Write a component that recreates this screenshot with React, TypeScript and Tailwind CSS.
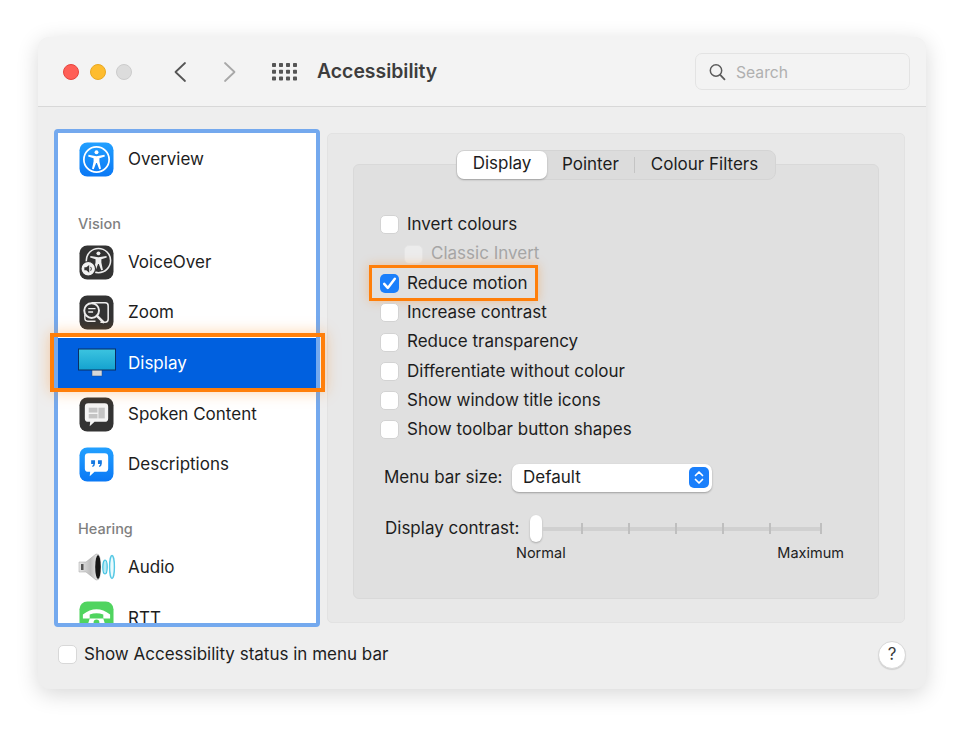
import React from "react";

const font = { fontFamily: '"Inter", "Liberation Sans", sans-serif' };

function Person({ cx = 18, cy = 18, c = "#fff" }: { cx?: number; cy?: number; c?: string }) {
  return (
    <g transform={`translate(${cx - 18} ${cy - 18})`} fill={c}>
      <circle cx="18" cy="10.6" r="2" />
      <path d="M9.8 13.2 L18 14.6 L26.2 13.2 L26.6 14.8 L21 16.6 L21 20 L22.6 27.6 L20.8 28 L18.4 21.6 L17.6 21.6 L15.2 28 L13.4 27.6 L15 20 L15 16.6 L9.4 14.8 Z" />
    </g>
  );
}

function IconOverview() {
  return (
    <svg width="35" height="35" viewBox="0 0 36 36">
      <defs>
        <linearGradient id="blueg" x1="0" y1="0" x2="0" y2="1">
          <stop offset="0" stopColor="#22a0ff" />
          <stop offset="1" stopColor="#0a78f5" />
        </linearGradient>
      </defs>
      <rect x="0.5" y="0.5" width="35" height="35" rx="8" fill="url(#blueg)" />
      <circle cx="18" cy="18" r="13" fill="none" stroke="#fff" strokeWidth="1.8" />
      <Person />
    </svg>
  );
}

function IconVoiceOver() {
  return (
    <svg width="35" height="35" viewBox="0 0 36 36">
      <rect x="0.5" y="0.5" width="35" height="35" rx="8" fill="#333333" />
      <circle cx="20" cy="16" r="12.5" fill="none" stroke="#eee" strokeWidth="1.6" />
      <g transform="translate(2 -2)">
        <Person c="#eee" />
      </g>
      <circle cx="9.5" cy="24.5" r="7.5" fill="#f1f1f1" stroke="#333" strokeWidth="1.2" />
      <path d="M5.5 23 H7.5 L10.5 20.5 V28.5 L7.5 26 H5.5 Z" fill="#333" />
      <path d="M12 22.5 Q13.5 24.5 12 26.5" fill="none" stroke="#333" strokeWidth="1" />
    </svg>
  );
}

function IconZoom() {
  return (
    <svg width="35" height="35" viewBox="0 0 36 36">
      <rect x="0.5" y="0.5" width="35" height="35" rx="8" fill="#333333" />
      <path d="M13 8 H27 Q30 8 30 11 V25 Q30 28 27 28 H22" fill="none" stroke="#eee" strokeWidth="1.6" />
      <circle cx="13" cy="16" r="7.6" fill="#333" stroke="#eee" strokeWidth="2" />
      <path d="M9.5 14 H17 M9.5 17.5 H14.5" stroke="#eee" strokeWidth="1.5" />
      <path d="M18.5 21.5 L25 28" stroke="#eee" strokeWidth="2.6" strokeLinecap="round" />
      <path d="M6 20 V24 Q6 27 9 27 H17" fill="none" stroke="#eee" strokeWidth="1.4" />
    </svg>
  );
}

function IconDisplay() {
  return (
    <svg width="38" height="30" viewBox="0 0 38 30">
      <defs>
        <linearGradient id="dispg" x1="0" y1="0" x2="0" y2="1">
          <stop offset="0" stopColor="#3cc4e0" />
          <stop offset="1" stopColor="#14a2cf" />
        </linearGradient>
      </defs>
      <rect x="14" y="21" width="10" height="7" fill="#d8d8d8" stroke="#1c4a8a" strokeWidth="0.5" />
      <rect x="0.5" y="1" width="37" height="21" fill="url(#dispg)" stroke="#0b2f63" strokeWidth="1" />
    </svg>
  );
}

function IconSpoken() {
  return (
    <svg width="35" height="35" viewBox="0 0 36 36">
      <rect x="0.5" y="0.5" width="35" height="35" rx="8" fill="#333333" />
      <path d="M9.5 6.5 H26.5 Q30 6.5 30 10 V22 Q30 25.5 26.5 25.5 H16 L11 30 L11.5 25.5 H9.5 Q6 25.5 6 22 V10 Q6 6.5 9.5 6.5 Z" fill="#f4f4f4" />
      <rect x="10" y="11" width="9" height="5" fill="#c4c4c4" />
      <rect x="10" y="17.5" width="9" height="4.5" fill="#c4c4c4" />
      <rect x="20" y="11" width="6.5" height="11" fill="#c4c4c4" />
    </svg>
  );
}

function IconDescriptions() {
  return (
    <svg width="35" height="35" viewBox="0 0 36 36">
      <rect x="0.5" y="0.5" width="35" height="35" rx="8" fill="url(#blueg)" />
      <path d="M9.5 6.5 H26.5 Q30 6.5 30 10 V22 Q30 25.5 26.5 25.5 H16 L11 30 L11.5 25.5 H9.5 Q6 25.5 6 22 V10 Q6 6.5 9.5 6.5 Z" fill="#fff" />
      <path d="M12.5 13.5 H16.5 V17 Q16.5 19.5 14 20.5 L13.5 19.5 Q14.8 18.6 14.8 17.4 H12.5 Z M19.5 13.5 H23.5 V17 Q23.5 19.5 21 20.5 L20.5 19.5 Q21.8 18.6 21.8 17.4 H19.5 Z" fill="#1477e0" />
    </svg>
  );
}

function IconAudio() {
  return (
    <svg width="38" height="30" viewBox="0 0 38 30">
      <defs>
        <linearGradient id="spk" x1="0" y1="0" x2="1" y2="0">
          <stop offset="0" stopColor="#e8e8e8" />
          <stop offset="0.55" stopColor="#bdbdbd" />
          <stop offset="1" stopColor="#f4f4f4" />
        </linearGradient>
      </defs>
      <path d="M1 10 H8 L18 2 Q21 1 22 6 V24 Q21 29 18 28 L8 20 H1 Z" fill="url(#spk)" stroke="#a0a0a0" strokeWidth="0.5" />
      <rect x="3" y="12" width="2.5" height="6" fill="#555" />
      <ellipse cx="20" cy="15" rx="2.8" ry="12" fill="#161616" />
      <ellipse cx="27" cy="15" rx="2.2" ry="7" fill="#b8eaf6" stroke="#3fc0e0" strokeWidth="1.2" />
      <ellipse cx="34" cy="15" rx="2.4" ry="11.5" fill="#e9fafd" stroke="#55c8e4" strokeWidth="1.4" />
    </svg>
  );
}

function IconRTT() {
  return (
    <svg width="35" height="35" viewBox="0 0 36 36">
      <rect x="0.5" y="0.5" width="35" height="35" rx="8" fill="#50d45f" />
      <path d="M4 14 Q18 3 32 14 V18 H25 V14 Q18 11 11 14 V18 H4 Z" fill="#fff" />
      <path d="M11 18 H25 L28 28 H8 Z" fill="#fff" />
      <circle cx="18" cy="22" r="3" fill="#50d45f" />
    </svg>
  );
}

function Row({ icon, label, selected }: { icon: React.ReactNode; label: string; selected?: boolean }) {
  return (
    <div className={`flex h-[50.7px] shrink-0 items-center ${selected ? "bg-[#0060df] text-white" : "text-[#1d1d1d]"}`}>
      <div className="flex w-[70px] shrink-0 justify-center pl-[7px]">{icon}</div>
      <span className="text-[17px] leading-none">{label}</span>
    </div>
  );
}

function SideHeading({ label }: { label: string }) {
  return (
    <div className="flex h-[52px] shrink-0 items-end pb-[3px] pl-[20px] text-[14.5px] font-medium leading-[20px] text-[#7f7f7f]">
      {label}
    </div>
  );
}

function Check({ checked, dim }: { checked?: boolean; dim?: boolean }) {
  if (checked) {
    return (
      <span className="flex h-[19px] w-[19px] shrink-0 items-center justify-center rounded-[5px] bg-[#1a7ffb]">
        <svg width="17" height="17" viewBox="0 0 15 15">
          <path d="M2.8 7.8 L6 11.4 L12.2 3.4" fill="none" stroke="#fff" strokeWidth="2.2" strokeLinecap="round" strokeLinejoin="round" />
        </svg>
      </span>
    );
  }
  return (
    <span
      className={`block h-[19px] w-[19px] shrink-0 rounded-[5px] border ${
        dim ? "border-[#e4e4e4] bg-[#ececec]" : "border-[#d3d3d3] bg-white"
      }`}
    />
  );
}

function Option({ label, checked, highlight }: { label: string; checked?: boolean; highlight?: boolean }) {
  return (
    <div className="relative flex h-[29.3px] items-center gap-[8px] text-[17px] text-[#1d1d1d]">
      <Check checked={checked} />
      <span>{label}</span>
      {highlight && (
        <div className="absolute left-[-11px] top-[-4px] h-[36px] w-[169px] border-[3px] border-[#ff7f0a] shadow-[0_0_10px_rgba(255,127,10,0.35)]" />
      )}
    </div>
  );
}

const options: { label: string; checked?: boolean; highlight?: boolean }[] = [
  { label: "Reduce motion", checked: true, highlight: true },
  { label: "Increase contrast" },
  { label: "Reduce transparency" },
  { label: "Differentiate without colour" },
  { label: "Show window title icons" },
  { label: "Show toolbar button shapes" },
];

const ticks = [1, 2, 3, 4];

export default function App() {
  return (
    <div className="h-[730px] w-[963px] overflow-hidden bg-white pl-[38px] pt-[37px]" style={font}>
      <div className="flex h-[652px] w-[888px] flex-col overflow-hidden rounded-[12px] bg-[#eeeeee] shadow-[0_5px_22px_rgba(0,0,0,0.16)]">
        {/* Title bar */}
        <div className="flex h-[70px] shrink-0 items-center border-b border-[#d8d8d8] bg-[#f3f3f3] pl-[25px] pr-[16px]">
          <span className="h-[16px] w-[16px] rounded-full border border-[#e6443e] bg-[#ff5f57]" />
          <span className="ml-[11px] h-[16px] w-[16px] rounded-full border border-[#e8a823] bg-[#febc2e]" />
          <span className="ml-[10px] h-[16px] w-[16px] rounded-full border border-[#cccccc] bg-[#dcdcdc]" />
          <svg className="ml-[41px]" width="14" height="22" viewBox="0 0 14 22">
            <path d="M12 2 L2.5 11 L12 20" fill="none" stroke="#555" strokeWidth="1.8" strokeLinecap="round" strokeLinejoin="round" />
          </svg>
          <svg className="ml-[36px]" width="14" height="22" viewBox="0 0 14 22">
            <path d="M2 2 L11.5 11 L2 20" fill="none" stroke="#a8a8a8" strokeWidth="1.8" strokeLinecap="round" strokeLinejoin="round" />
          </svg>
          <svg className="ml-[35px]" width="25" height="18" viewBox="0 0 25 18" fill="#555">
            {[0, 1, 2].map((r) =>
              [0, 1, 2, 3].map((c) => <rect key={`${r}-${c}`} x={c * 7} y={r * 6.8} width="4" height="4" rx="0.8" />)
            )}
          </svg>
          <span className="ml-[20px] text-[19.4px] font-semibold text-[#3d3d3d]">Accessibility</span>
          <div className="ml-auto flex h-[37px] w-[215px] items-center rounded-[7px] border border-[#e3e3e3] bg-[#f3f3f3] pl-[13px]">
            <svg width="17" height="18" viewBox="0 0 17 18">
              <circle cx="7" cy="7.5" r="5.7" fill="none" stroke="#5c5c5c" strokeWidth="1.5" />
              <path d="M11.2 11.8 L15.5 16.3" stroke="#5c5c5c" strokeWidth="1.8" strokeLinecap="round" />
            </svg>
            <span className="ml-[10px] pt-[2px] text-[15.7px] text-[#b0b0b0]">Search</span>
          </div>
        </div>

        {/* Body */}
        <div className="relative flex min-h-0 flex-1 flex-col px-[16px]">
          <div className="mt-[22px] flex h-[498px] items-start">
            {/* Sidebar */}
            <div className="flex h-[498px] w-[266px] shrink-0 flex-col overflow-hidden rounded-[4px] border-[4px] border-[#74a9ee] bg-white pt-[1px]">
              <Row icon={<IconOverview />} label="Overview" />
              <SideHeading label="Vision" />
              <Row icon={<IconVoiceOver />} label="VoiceOver" />
              <Row icon={<IconZoom />} label="Zoom" />
              <Row icon={<IconDisplay />} label="Display" selected />
              <Row icon={<IconSpoken />} label="Spoken Content" />
              <Row icon={<IconDescriptions />} label="Descriptions" />
              <SideHeading label="Hearing" />
              <Row icon={<IconAudio />} label="Audio" />
              <Row icon={<IconRTT />} label="RTT" />
            </div>

            {/* Right panel */}
            <div className="ml-[7px] mt-[4px] flex h-[490px] w-[578px] flex-col rounded-[5px] border border-[#e2e2e2] bg-[#e8e8e8] px-[25px] pt-[16px]">
              <div className="relative z-10 mb-[-16px] flex h-[30px] w-[320px] items-center self-center rounded-[8px] border border-[#d4d4d4] bg-[#dcdcdc] pb-[1px] text-[17px] text-[#1d1d1d]">
                <div className="flex h-[28px] w-[90px] items-center justify-center rounded-[7px] bg-white pb-[1px] shadow-[0_1px_2px_rgba(0,0,0,0.25)]">
                  Display
                </div>
                <span className="ml-[15px]">Pointer</span>
                <span className="ml-[15px] h-[16px] w-px bg-[#c4c4c4]" />
                <span className="ml-[16px]">Colour Filters</span>
              </div>
              <div className="flex h-[435px] w-[526px] flex-col rounded-[6px] border border-[#d9d9d9] bg-[#e0e0e0] pl-[26px] pt-[45.2px]">
                <Option label="Invert colours" />
                <div className="flex h-[29.3px] items-center gap-[8px] pl-[24px] text-[17px] text-[#a6a6a6]">
                  <Check dim />
                  <span>Classic Invert</span>
                </div>
                {options.map((o) => (
                  <Option key={o.label} {...o} />
                ))}

                <div className="ml-[4px] mt-[19.4px] flex h-[28px] items-center text-[17px] text-[#1d1d1d]">
                  <span className="w-[128px] shrink-0">Menu bar size:</span>
                  <div className="flex h-[28px] w-[200px] items-center rounded-[7px] bg-white pl-[11px] pr-[3px] shadow-[0_1px_2px_rgba(0,0,0,0.3)]">
                    <span>Default</span>
                    <span className="ml-auto flex h-[21px] w-[20px] items-center justify-center rounded-[5px] bg-[#1a7ffb]">
                      <svg width="12" height="17" viewBox="0 0 12 17">
                        <path d="M2.5 6.5 L6 3 L9.5 6.5 M2.5 10.5 L6 14 L9.5 10.5" fill="none" stroke="#fff" strokeWidth="1.7" strokeLinecap="round" strokeLinejoin="round" />
                      </svg>
                    </span>
                  </div>
                </div>

                <div className="ml-[5px] mt-[23px] flex h-[28px] items-center text-[17px] text-[#1d1d1d]">
                  <span className="w-[145px] shrink-0">Display contrast:</span>
                  <span className="h-[27px] w-[12px] shrink-0 rounded-[6px] bg-white shadow-[0_1px_2px_rgba(0,0,0,0.25)]" />
                  <div className="relative flex h-[12px] w-[280px] items-center">
                    <div className="absolute inset-x-0 top-[4px] h-[4px] bg-[#d0d0d0]" />
                    <span className="relative ml-[39px] h-[11px] w-[2px] bg-[#bfbfbf]" />
                    {ticks.map((t) => (
                      <span key={t} className="relative ml-[45px] h-[11px] w-[2px] bg-[#bfbfbf]" />
                    ))}
                    <span className="relative ml-auto h-[11px] w-[2px] bg-[#bfbfbf]" />
                  </div>
                </div>
                <div className="ml-[136px] flex w-[328px] justify-between text-[14.5px] leading-[20px] text-[#1d1d1d]">
                  <span>Normal</span>
                  <span>Maximum</span>
                </div>
              </div>
            </div>
          </div>

          {/* Footer */}
          <div className="mt-[14px] flex h-[27px] items-center">
            <span className="ml-[4px] block h-[19px] w-[19px] rounded-[5px] border border-[#d8d8d8] bg-white" />
            <span className="ml-[7px] text-[17px] text-[#1d1d1d]">Show Accessibility status in menu bar</span>
            <span className="ml-auto mr-[4px] flex h-[28px] w-[28px] items-center justify-center rounded-full border border-[#d8d8d8] bg-white text-[17px] text-[#3a3a3a] shadow-[0_1px_1px_rgba(0,0,0,0.12)]">
              ?
            </span>
          </div>

          {/* Annotation over the selected row */}
          <div className="absolute left-[12px] top-[226px] h-[59px] w-[275px] border-[4px] border-[#ff7f0a] shadow-[0_0_14px_rgba(255,127,10,0.35)]" />
        </div>
      </div>
    </div>
  );
}
